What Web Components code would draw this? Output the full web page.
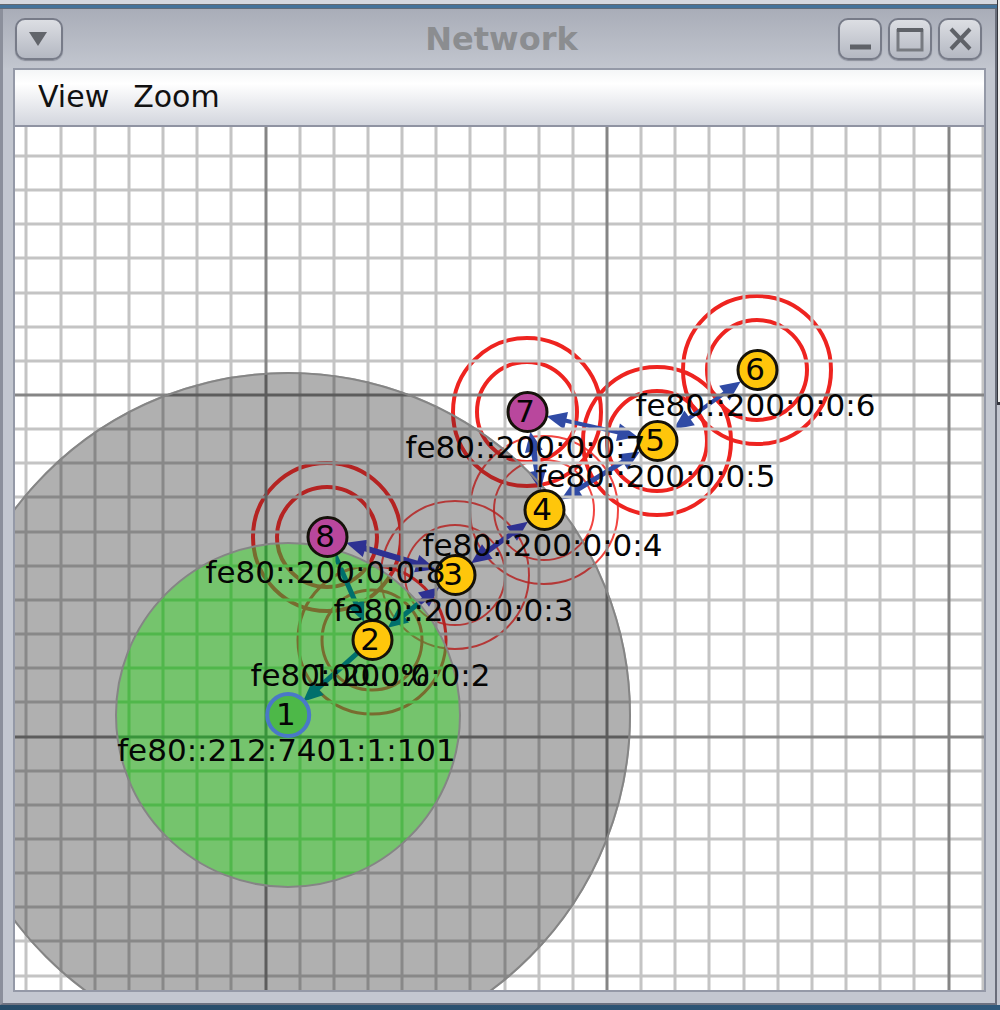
<!DOCTYPE html>
<html lang="en">
<head>
<meta charset="utf-8">
<title>Network</title>
<style>
  html, body { height: 100%; margin: 0; }
  body { font-family: "DejaVu Sans", sans-serif; color: #111; background: #2b5373; overflow: hidden; }
</style>
</head>
<body>
<desktop-area>
  <app-window heading="Network">
    <menu-bar slot="menu">
      <menu-item>View</menu-item>
      <menu-item>Zoom</menu-item>
    </menu-bar>
    <network-map>
      <network-node x="273" y="588" kind="sink" number="1">fe80::212:7401:1:101</network-node>
      <network-node x="357" y="513" kind="relay" number="2">fe80::200:0:0:2<span slot="rate">100.0%</span></network-node>
      <network-node x="440" y="448" kind="relay" number="3">fe80::200:0:0:3</network-node>
      <network-node x="529" y="383" kind="relay" number="4">fe80::200:0:0:4</network-node>
      <network-node x="642" y="314" kind="relay" number="5">fe80::200:0:0:5</network-node>
      <network-node x="742" y="243" kind="relay" number="6">fe80::200:0:0:6</network-node>
      <network-node x="512" y="285" kind="source" number="7">fe80::200:0:0:7</network-node>
      <network-node x="312" y="410" kind="source" number="8">fe80::200:0:0:8</network-node>
    </network-map>
  </app-window>
</desktop-area>

<script>
class Base extends HTMLElement {
  constructor() {
    super();
    this.attachShadow({ mode: "open" });
  }
  connectedCallback() { this.shadowRoot.innerHTML = this.render(); }
}

customElements.define("desktop-area", class extends Base {
  render() {
    return `<style>
      :host { display: grid; grid-template-columns: minmax(0, 1fr) 3px; height: 100vh; box-sizing: border-box;
              grid-template-rows: minmax(0, 1fr); padding-bottom: 5px;
              background: linear-gradient(90deg, #264c68, #2f597b); }
      .side { display: flex; flex-direction: column; background: #c3c6cf; }
      .side::before { content: ""; height: 40%; background: #efeeec; border-left: 1px solid #33353d; border-bottom: 3px solid #33353d; }
    </style><slot></slot><div class="side"></div>`;
  }
});

customElements.define("app-window", class extends Base {
  render() {
    return `<style>
      :host { display: flex; flex-direction: column; box-sizing: border-box; min-height: 0;
              border-top: 4px solid #d5d8df; }
      .edge { height: 5px; box-sizing: border-box; background: #44739b;
              border-top: 1px solid #62686f; border-bottom: 1px solid #5f6c7b; }
      .frame { flex: 1; min-height: 0; display: flex; flex-direction: column; box-sizing: border-box;
               border-left: 3px solid #8b8f9b; border-right: 2px solid #6a6e7a; border-bottom: 2px solid #6d7280;
               background: #c3c7d0; }
      header { display: flex; align-items: center; gap: 6px; height: 59px; padding: 0 13px 0 12px;
               background: linear-gradient(#a9adb8, #c2c6cf); }
      h1 { flex: 1; margin: 0; padding-left: 102px; text-align: center; font-size: 32px; line-height: 40px; color: #8b8d90; }
      button { width: 44px; height: 42px; padding: 0; border: 2px solid #777b88; border-radius: 10px;
               background: linear-gradient(#dcdee3, #b4b8c2); box-shadow: 0 1px 1px #8b8f9b; }
      .menu { width: 48px; }
      svg { display: block; margin: auto; }
      .client { flex: 1; min-height: 0; display: flex; flex-direction: column; margin: 0 9px 11px 10px;
                border: 2px solid #9499a7; }
      ::slotted(network-map) { flex: 1; min-height: 0; }
    </style>
    <div class="edge"></div>
    <div class="frame">
      <header>
        <button class="menu" aria-label="Window menu"><svg width="40" height="36"><path d="M10 11H28L19 25Z" fill="#62656b"/></svg></button>
        <h1>${this.getAttribute("heading")}</h1>
        <button aria-label="Minimize"><svg width="40" height="36"><path d="M10 26H31" stroke="#5f6268" stroke-width="5"/></svg></button>
        <button aria-label="Maximize"><svg width="40" height="36"><path d="M8 8V29H32V8" fill="none" stroke="#777a80" stroke-width="3"/><path d="M7 9H33" stroke="#5f6268" stroke-width="4"/></svg></button>
        <button aria-label="Close"><svg width="40" height="36"><path d="M11 8L30 28M30 8L11 28" stroke="#5f6268" stroke-width="4"/></svg></button>
      </header>
      <div class="client"><slot name="menu"></slot><slot></slot></div>
    </div>`;
  }
});

customElements.define("menu-bar", class extends Base {
  render() {
    return `<style>
      :host { display: block; border-bottom: 2px solid #8f93a2; }
      nav { display: flex; gap: 24px; height: 55px; align-items: center; padding-left: 23px;
            background: linear-gradient(#f4f6f7, #fff 25%, #d3d6de); }
    </style><nav><slot></slot></nav>`;
  }
});

customElements.define("menu-item", class extends Base {
  render() {
    return `<style>
      :host { display: block; }
      button { display: block; padding: 0 0 2px; border: 0; background: none; color: #111; font: 30px/36px "DejaVu Sans", sans-serif; }
    </style><button><slot></slot></button>`;
  }
});

customElements.define("network-node", class extends Base {
  render() {
    const fill = { sink: "#4db848", relay: "#ffc60b", source: "#b9479d" }[this.getAttribute("kind")];
    this.style.left = this.getAttribute("x") + "px";
    this.style.top = this.getAttribute("y") + "px";
    return `<style>
      :host { position: absolute; display: grid; justify-items: center; grid-template-rows: 46px 24px;
              margin-top: -23px; transform: translateX(-50%); font-size: 31px; line-height: 24px; color: #050505; }
      .disc { display: grid; place-items: center; align-self: center; box-sizing: border-box; width: 42px; height: 42px;
              border: 3px solid #15120a; border-radius: 50%; background: ${fill}; padding: 0 4px 2px 0; }
      :host([kind=sink]) .disc { width: 46px; height: 46px; border: 4px solid #4a78c8; }
      .label, .rate { grid-area: 2 / 1; padding-right: 3px; white-space: nowrap; }
    </style>
    <div class="disc">${this.getAttribute("number")}</div>
    <div class="label"><slot></slot></div>
    <div class="rate"><slot name="rate"></slot></div>`;
  }
});

customElements.define("network-map", class extends Base {
  render() {
    const at = {};
    for (const n of this.querySelectorAll("network-node"))
      at[n.getAttribute("number")] = { x: +n.getAttribute("x"), y: +n.getAttribute("y") };

    // ring stroke width per node
    const weight = { 2: 3, 3: 2, 4: 2, 5: 4, 6: 4, 7: 4, 8: 4 };
    const rings = Object.entries(weight).map(([n, w]) => [50, 74].map(r =>
      `<circle cx="${at[n].x}" cy="${at[n].y}" r="${r}" stroke-width="${w}" ${w === 2 ? 'opacity=".85"' : ""}/>`).join("")).join("");

    // from, to, line width, head on both ends
    const links = [[5, 6, 4, 1], [5, 7, 4, 1], [5, 4, 5, 1], [7, 4, 6, 1], [4, 3, 5, 1], [3, 8, 6, 1], [8, 2, 5, 0], [3, 2, 5, 1], [2, 1, 5, 0]];
    const head = (p, ux, uy) => {
      const bx = p.x - ux * 20, by = p.y - uy * 20;
      return `<path d="M${p.x} ${p.y}L${bx - uy * 9} ${by + ux * 9}L${bx + uy * 9} ${by - ux * 9}Z" stroke="none"/>`;
    };
    const arrows = links.map(([a, b, w, both]) => {
      const p = at[a], q = at[b], d = Math.hypot(q.x - p.x, q.y - p.y);
      const ux = (q.x - p.x) / d, uy = (q.y - p.y) / d;
      const s = { x: p.x + ux * 20, y: p.y + uy * 20 }, e = { x: q.x - ux * 20, y: q.y - uy * 20 };
      const from = both ? 30 : 20;
      return `<path d="M${p.x + ux * from} ${p.y + uy * from}L${q.x - ux * 32} ${q.y - uy * 32}" stroke-width="${w}"/>`
        + head(e, ux, uy) + (both ? head(s, -ux, -uy) : "");
    }).join("");

    const step = 34.15;
    let minor = "", major = "";
    for (let i = -7; i < 60; i++) {
      const x = Math.round(250.5 + i * step), y = Math.round(268 + i * step);
      const v = `M${x} 0V3000`, h = `M0 ${y}H3000`;
      if (i % 10 === 0) major += v + h; else minor += v + h;
    }

    const layer = (clip, ring, arrow, light, dark) => `<g ${clip}>
      <use href="#rings" color="${ring}"/><use href="#arrows" color="${arrow}"/>
      <use href="#minor" color="${light}"/><use href="#major" color="${dark}"/></g>`;
    const c = at[1];

    return `<style>
      :host { display: block; position: relative; overflow: hidden; background: #fff; }
      svg { display: block; width: 100%; height: 100%; }
    </style>
    <svg aria-hidden="true">
      <defs>
        <g id="rings" fill="none" stroke="currentColor">${rings}</g>
        <g id="arrows" fill="currentColor" stroke="currentColor">${arrows}</g>
        <path id="minor" d="${minor}" stroke="currentColor" stroke-width="3"/>
        <path id="major" d="${major}" stroke="currentColor" stroke-width="3"/>
        <clipPath id="far"><circle cx="${c.x}" cy="${c.y}" r="343"/></clipPath>
        <clipPath id="near"><circle cx="${c.x}" cy="${c.y}" r="172"/></clipPath>
      </defs>
      ${layer("", "#ee2420", "#304ba5", "#c4c4c4", "#858585")}
      <circle cx="${c.x}" cy="${c.y}" r="343" fill="#b0b0b0"/>
      ${layer('clip-path="url(#far)"', "#b52322", "#2e3192", "#888", "#5c5c5c")}
      <circle cx="${c.x}" cy="${c.y}" r="342" fill="none" stroke="#858585" stroke-width="2"/>
      <circle cx="${c.x}" cy="${c.y}" r="172" fill="#75c46d"/>
      ${layer('clip-path="url(#near)"', "#786c2f", "#00706c", "#50b74b", "#38943b")}
      <circle cx="${c.x}" cy="${c.y}" r="172" fill="none" stroke="#858585" stroke-width="2"/>
    </svg>
    <slot></slot>`;
  }
});
</script>
</body>
</html>
